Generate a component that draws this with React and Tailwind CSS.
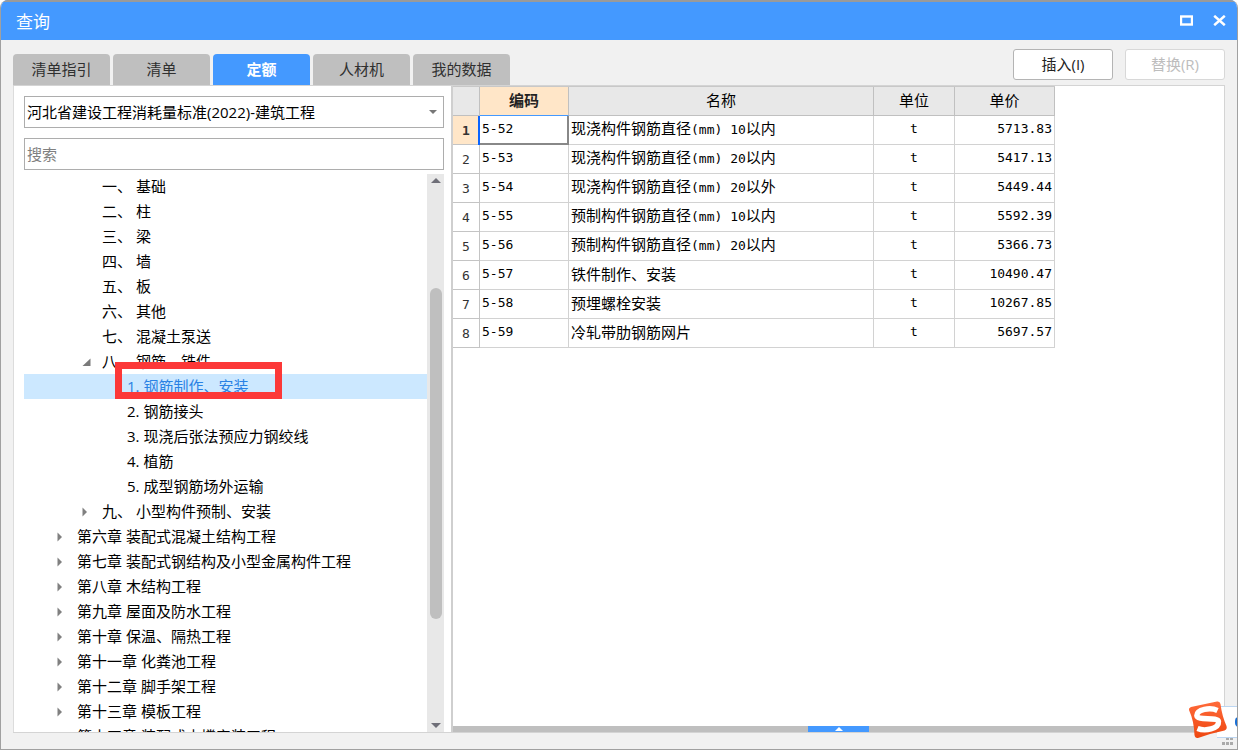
import React, { useState } from "react";

const TABS = ["清单指引", "清单", "定额", "人材机", "我的数据"];

const TREE = [
  { level: 1, label: "一、 基础" },
  { level: 1, label: "二、 柱" },
  { level: 1, label: "三、 梁" },
  { level: 1, label: "四、 墙" },
  { level: 1, label: "五、 板" },
  { level: 1, label: "六、 其他" },
  { level: 1, label: "七、 混凝土泵送" },
  { level: 1, label: "八、 钢筋、铁件", arrow: "open" },
  { level: 2, label: "1. 钢筋制作、安装", marked: true },
  { level: 2, label: "2. 钢筋接头" },
  { level: 2, label: "3. 现浇后张法预应力钢绞线" },
  { level: 2, label: "4. 植筋" },
  { level: 2, label: "5. 成型钢筋场外运输" },
  { level: 1, label: "九、 小型构件预制、安装", arrow: "closed" },
  { level: 0, label: "第六章 装配式混凝土结构工程", arrow: "closed" },
  { level: 0, label: "第七章 装配式钢结构及小型金属构件工程", arrow: "closed" },
  { level: 0, label: "第八章 木结构工程", arrow: "closed" },
  { level: 0, label: "第九章 屋面及防水工程", arrow: "closed" },
  { level: 0, label: "第十章 保温、隔热工程", arrow: "closed" },
  { level: 0, label: "第十一章 化粪池工程", arrow: "closed" },
  { level: 0, label: "第十二章 脚手架工程", arrow: "closed" },
  { level: 0, label: "第十三章 模板工程", arrow: "closed" },
  { level: 0, label: "第十四章 装配式支撑安装工程" },
];

const ROWS = [
  { code: "5-52", name: "现浇构件钢筋直径(mm) 10以内", unit: "t", price: "5713.83" },
  { code: "5-53", name: "现浇构件钢筋直径(mm) 20以内", unit: "t", price: "5417.13" },
  { code: "5-54", name: "现浇构件钢筋直径(mm) 20以外", unit: "t", price: "5449.44" },
  { code: "5-55", name: "预制构件钢筋直径(mm) 10以内", unit: "t", price: "5592.39" },
  { code: "5-56", name: "预制构件钢筋直径(mm) 20以内", unit: "t", price: "5366.73" },
  { code: "5-57", name: "铁件制作、安装", unit: "t", price: "10490.47" },
  { code: "5-58", name: "预埋螺栓安装", unit: "t", price: "10267.85" },
  { code: "5-59", name: "冷轧带肋钢筋网片", unit: "t", price: "5697.57" },
];

const INDENT = ["pl-[33px]", "pl-[58px]", "pl-[83px]"];

const MONO = "font-['DejaVu_Sans_Mono','Noto_Sans_CJK_SC',monospace] text-[13px]";

// half-width runs are set in the mono face, the rest stays in the CJK face
const MixedText = ({ text }) =>
  text.split(/([\x20-\x7e]+)/).map((part, i) =>
    i % 2 ? <span key={i} className={`${MONO} whitespace-pre`}>{part}</span> : part
  );

const Arrow = ({ open }) => (
  <button
    type="button"
    aria-label={open ? "折叠" : "展开"}
    className="flex h-full w-5 shrink-0 items-center"
  >
    <svg width="10" height="10" viewBox="0 0 10 10" fill={open ? "#7a7a7a" : "#808080"}>
      {open ? <path d="M8.500 1.500v7.500H0.500z" /> : <path d="M0.500 0.500L5 5 0.500 9.500z" />}
    </svg>
  </button>
);

const TitleBar = () => (
  <header className="flex h-10 shrink-0 items-center justify-between border-t-2 border-[#9a9a9a] bg-[#4499ff] pb-[2px] pl-[15px] pr-[11px]">
    <h1 className="mt-1 text-[17px] text-white">查询</h1>
    <div className="flex items-center gap-5">
      <button type="button" aria-label="最大化">
        <svg width="13" height="11" viewBox="0 0 13 11">
          <rect x="1" y="1.5" width="11" height="8" fill="none" stroke="#fff" strokeWidth="2.4" />
        </svg>
      </button>
      <button type="button" aria-label="关闭">
        <svg width="13" height="11" viewBox="0 0 13 11">
          <path d="M1.2 0.8L11.8 10.2M11.8 0.8L1.2 10.2" stroke="#fff" strokeWidth="2.5" />
        </svg>
      </button>
    </div>
  </header>
);

const Toolbar = ({ tab, onTab }) => (
  <div className="flex h-[45px] shrink-0 items-end justify-between">
    <nav className="flex gap-[3px]" role="tablist">
      {TABS.map(t => (
        <button
          key={t}
          type="button"
          role="tab"
          aria-selected={t === tab}
          onClick={() => onTab(t)}
          className={`h-[31px] w-[97px] rounded-t-sm pb-[2px] ${
            t === tab ? "bg-[#4499ff] font-bold text-white" : "bg-[#bfbfbf] text-[#303030]"
          }`}
        >
          {t}
        </button>
      ))}
    </nav>
    <div className="flex gap-3 self-start pt-[9px]">
      <button type="button" className="h-[31px] w-[100px] rounded-[3px] border border-[#b4b4b4] bg-white pb-[2px] text-[#222]">
        插入(I)
      </button>
      <button type="button" disabled className="h-[31px] w-[100px] rounded-[3px] border border-[#d8d8d8] bg-white pb-[2px] text-[#bdbdbd]">
        替换(R)
      </button>
    </div>
  </div>
);

const TreeRow = ({ node, selected, onSelect }) => (
  <li
    role="treeitem"
    aria-selected={selected}
    onClick={onSelect}
    className={`relative flex h-[25px] items-center whitespace-nowrap ${INDENT[node.level]} ${
      selected ? "bg-[#cce8ff] text-[#2a82e4]" : ""
    }`}
  >
    {node.arrow ? <Arrow open={node.arrow === "open"} /> : <span className="w-5 shrink-0" />}
    <span className="pb-[2px]">{node.label}</span>
    {node.marked && (
      <span className="pointer-events-none absolute -top-3 left-[91px] h-[37px] w-[167px] border-7 border-[#fc3838]" />
    )}
  </li>
);

const ScrollBar = () => (
  <div className="flex w-[17px] shrink-0 flex-col items-center bg-[#e8e8e8]">
    <svg className="mt-1 shrink-0" width="10" height="5" viewBox="0 0 10 5"><path d="M5 0l5 5H0z" fill="#6f6f78" /></svg>
    <div className="h-[105px] shrink-0" />
    <div className="h-[331px] w-3 rounded-full bg-[#bfbfbf]" />
    <svg className="mb-1 mt-auto shrink-0" width="10" height="5" viewBox="0 0 10 5"><path d="M0 0h10L5 5z" fill="#6f6f78" /></svg>
  </div>
);

const Sidebar = () => {
  const [selected, setSelected] = useState("1. 钢筋制作、安装");
  return (
    <aside className="flex w-[438px] shrink-0 flex-col border-l border-[#dcdcdc] pl-[10px] pr-[7px] pt-[10px]">
      <div className="relative">
        <select
          aria-label="定额库"
          className="h-8 w-full appearance-none border border-[#adadad] bg-white px-[2px] text-black"
        >
          <option>河北省建设工程消耗量标准(2022)-建筑工程</option>
        </select>
        <svg className="pointer-events-none absolute right-[7px] top-[14px]" width="8" height="4" viewBox="0 0 8 4">
          <path d="M0 0h8L4 4z" fill="#777" />
        </svg>
      </div>
      <input
        type="text"
        aria-label="搜索"
        placeholder="搜索"
        className="mt-[10px] h-8 w-full shrink-0 border border-[#adadad] bg-white px-[2px] placeholder:text-[#808080]"
      />
      <div className="mt-1 flex min-h-0 flex-1">
        <ul role="tree" className="flex-1 overflow-hidden text-black">
          {TREE.map(n => (
            <TreeRow
              key={n.label}
              node={n}
              selected={n.label === selected}
              onSelect={() => setSelected(n.label)}
            />
          ))}
        </ul>
        <ScrollBar />
      </div>
    </aside>
  );
};

const HEAD = "border-b border-r border-[#c0c0c0] pt-0 pb-[2px] font-normal";
const CELL = "border-b border-r border-[#d2d2d2] pt-0 pb-[2px]";

const QuotaTable = () => (
  <table className="w-[602px] table-fixed border-separate border-spacing-0 border-t border-[#c8c8c8] text-black">
    <colgroup>
      <col className="w-[27px]" />
      <col className="w-[89px]" />
      <col className="w-[305px]" />
      <col className="w-[81px]" />
      <col className="w-[100px]" />
    </colgroup>
    <thead>
      <tr className="h-[29px] bg-[#e8e8e8]">
        <th className={HEAD} aria-label="序号" />
        <th className="border-b border-r border-[#c0c0c0] border-b-[#4499ff] bg-[#ffe6c8] pt-0 pb-[2px] font-bold text-[#222]">编码</th>
        <th className={HEAD}>名称</th>
        <th className={HEAD}>单位</th>
        <th className={HEAD}>单价</th>
      </tr>
    </thead>
    <tbody>
      {ROWS.map((r, i) => (
        <tr key={r.code} className="h-[29px]">
          <th
            scope="row"
            className={`border-b border-r border-[#c4c4c4] pt-[2px] text-[#333] ${MONO} ${
              i === 0 ? "bg-[#ffe6c8] font-bold" : "font-normal"
            }`}
          >
            {i + 1}
          </th>
          <td
            className={`${MONO} pl-[2px] ${
              i === 0
                ? "border-b-2 border-r-2 border-[#888] pt-0 pb-[1px] shadow-[-2px_0_0_#0a64ff]"
                : CELL
            }`}
          >
            {r.code}
          </td>
          <td className={`${CELL} pl-[2px]`}><MixedText text={r.name} /></td>
          <td className={`${CELL} ${MONO} text-center`}>{r.unit}</td>
          <td className={`${CELL} ${MONO} pr-[2px] text-right`}>{r.price}</td>
        </tr>
      ))}
    </tbody>
  </table>
);

const ImeBadge = () => (
  <div className="pointer-events-none absolute bottom-[10px] right-0 h-[39px] w-[49px]">
    <div className="absolute right-0 top-[6px] h-8 w-5 overflow-hidden border-y border-[#bcd6f2] bg-white">
      <span className="absolute left-[18px] top-[10px] h-[10px] w-1 rounded-l bg-[#1a6fd4]" />
    </div>
    <svg className="absolute left-0 top-0" width="41" height="39" viewBox="0 0 41 39">
      <defs>
        <linearGradient id="ime" x1="0" y1="0" x2="0" y2="1">
          <stop offset="0" stopColor="#ff6a3a" />
          <stop offset="1" stopColor="#ee4710" />
        </linearGradient>
      </defs>
      <path d="M3 7Q17 4 29 1.5Q32 1 32.500 4Q34 16 38.500 26Q39.500 29 36.500 30.500Q24 33 10 38Q7 38.500 6.500 35Q6 21 1 10Q0.500 8 3 7z" fill="url(#ime)" />
      <path d="M29.500 10.500C22 7 9 9.500 8.800 15.500C8.800 21 29.500 16.500 30.500 21.500C31 29 17 31.500 9.500 28.500" fill="none" stroke="#fff" strokeWidth="5.400" />
    </svg>
  </div>
);

const ResizeGrip = () => (
  <svg className="pointer-events-none absolute bottom-1 right-1" width="11" height="8" viewBox="0 0 11 8" fill="#aaa">
    <path d="M4 0h3v3H4zM8 0h3v3H8zM0 5h3v3H0zM4 5h3v3H4zM8 5h3v3H8z" />
  </svg>
);

const App = () => {
  const [tab, setTab] = useState("定额");
  return (
    <div className="h-screen bg-white font-['Open_Sans','Noto_Sans_CJK_SC',sans-serif] text-[15px] leading-5">
      <div className="relative flex h-full flex-col overflow-hidden rounded-t-lg border-x border-b border-[#a0a0a0] bg-[#f1f1f1]">
        <TitleBar />
        <div className="flex min-h-0 flex-1 flex-col px-3 pb-4">
          <Toolbar tab={tab} onTab={setTab} />
          <main className="flex min-h-0 flex-1 border-b border-r border-t border-[#d4d4d4] bg-white">
            <Sidebar />
            <section className="flex min-w-0 flex-1 flex-col border-l-2 border-[#cfcfcf]">
              <div className="min-h-0 flex-1 overflow-hidden">
                <QuotaTable />
              </div>
              <div className="flex h-[6px] shrink-0 justify-center bg-[#bfbfbf]">
                <button type="button" aria-label="展开明细" className="flex w-[61px] items-center justify-center bg-[#4499ff]">
                  <svg width="8" height="4" viewBox="0 0 8 4"><path d="M4 0l4 4H0z" fill="#fff" /></svg>
                </button>
              </div>
            </section>
          </main>
        </div>
        <ResizeGrip />
        <ImeBadge />
      </div>
    </div>
  );
};

export default App;
